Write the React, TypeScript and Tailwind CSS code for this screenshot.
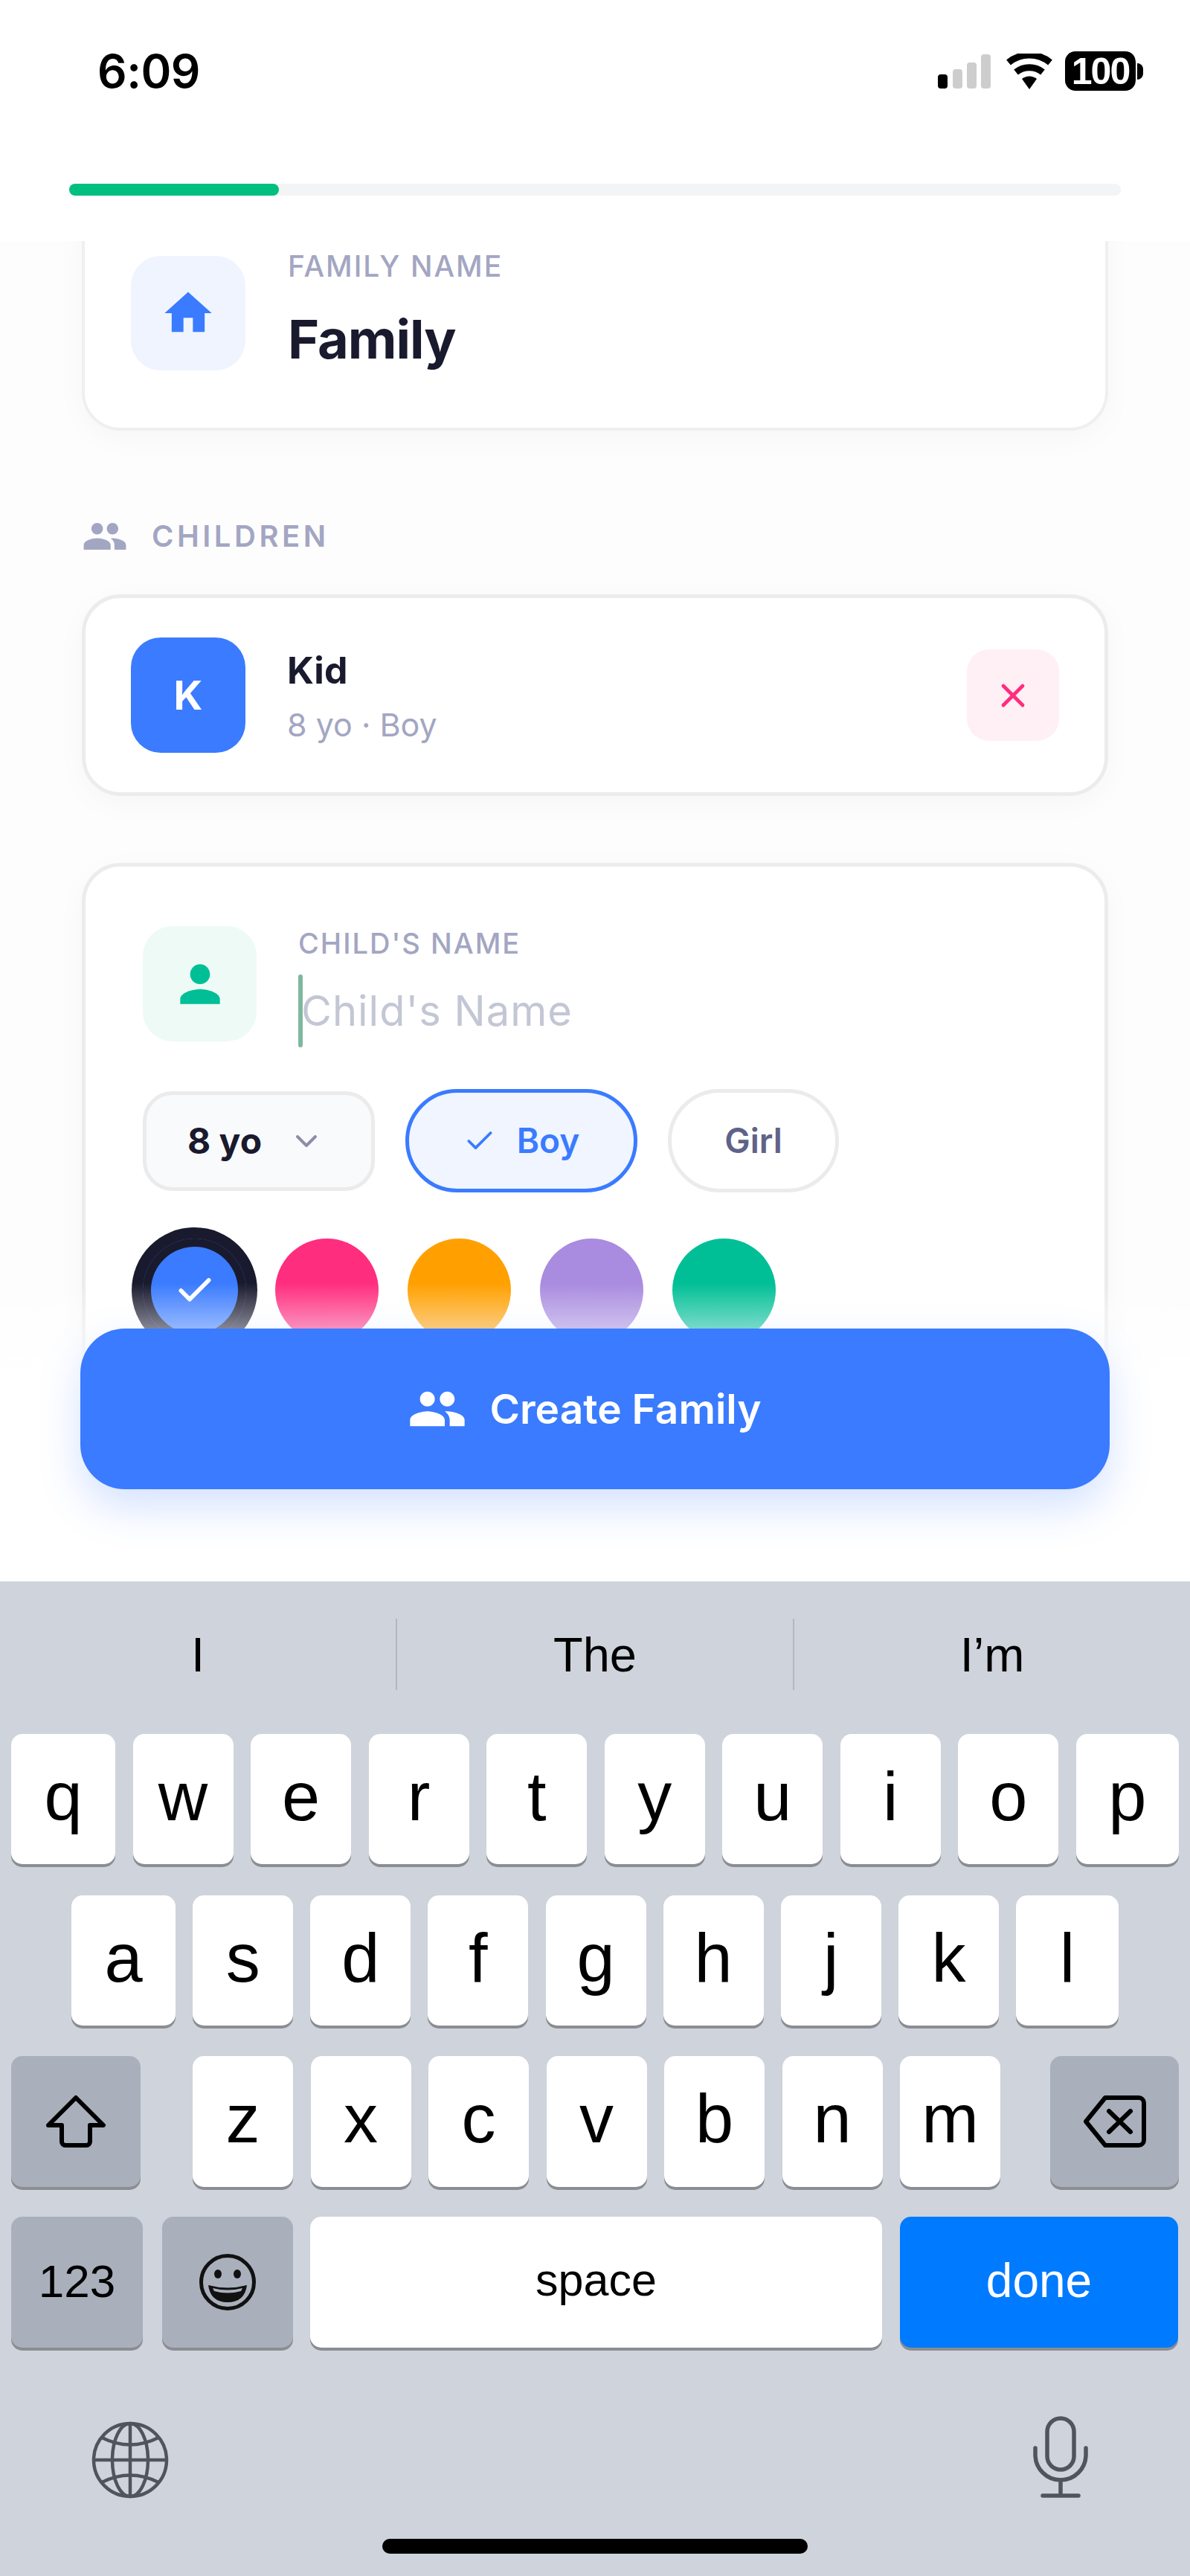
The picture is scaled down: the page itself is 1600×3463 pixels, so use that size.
import { Check, ChevronDown, X } from "lucide-react";
import { MdHome, MdPeople, MdPerson } from "react-icons/md";

const row1 = ["q", "w", "e", "r", "t", "y", "u", "i", "o", "p"];
const row2 = ["a", "s", "d", "f", "g", "h", "j", "k", "l"];
const row3 = ["z", "x", "c", "v", "b", "n", "m"];
const suggestions = ["I", "The", "I’m"];
const swatches = ["bg-[#ff2d7e]", "bg-[#ffa000]", "bg-[#a98bdf]", "bg-[#00bf96]"];

const keyBase =
  "flex items-center justify-center rounded-[15px] shadow-[0_4px_0_#8b8d92] font-['Liberation_Sans',sans-serif] text-black";

function LetterKey({ label }: { label: string }) {
  return (
    <div className={`${keyBase} h-[175px] w-[135px] bg-white pb-[8px] text-[92px] leading-none first:w-[140px] last:w-[138px]`}>
      {label}
    </div>
  );
}

function StatusIcons() {
  return (
    <div className="flex items-center">
      <svg width="72" height="46" viewBox="0 0 72 46">
        <rect x="0" y="27" width="13" height="19" rx="4" fill="#000" />
        <rect x="20" y="20" width="13" height="26" rx="4" fill="#cdcdcd" />
        <rect x="39" y="11" width="13" height="35" rx="4" fill="#cdcdcd" />
        <rect x="58" y="0" width="13" height="46" rx="4" fill="#cdcdcd" />
      </svg>
      <svg className="ml-[19px]" width="64" height="48" viewBox="0 0 64 48">
        <path d="M32 48 L22 34 a16 16 0 0 1 20 0 Z" fill="#000" />
        <path d="M14 25 a29 29 0 0 1 36 0" fill="none" stroke="#000" strokeWidth="9" />
        <path d="M4 12 a44 44 0 0 1 56 0" fill="none" stroke="#000" strokeWidth="9" />
      </svg>
      <div className="ml-[16px] flex h-[53px] w-[95px] items-center justify-center rounded-[14px] bg-black font-['Liberation_Sans',sans-serif] text-[50px] leading-none font-bold tracking-[-2px] text-white">
        100
      </div>
      <div className="ml-[2px] h-[22px] w-[8px] rounded-r-full bg-black" />
    </div>
  );
}

function ShiftIcon() {
  return (
    <svg width="82" height="72" viewBox="0 0 82 72" fill="none" stroke="#000" strokeWidth="6" strokeLinejoin="round">
      <path d="M41 4 L78 41 H60 V63 a5 5 0 0 1-5 5 H27 a5 5 0 0 1-5-5 V41 H4 Z" />
    </svg>
  );
}

function DeleteIcon() {
  return (
    <svg width="86" height="72" viewBox="0 0 86 72" fill="none" stroke="#000" strokeWidth="6" strokeLinejoin="round" strokeLinecap="round">
      <path d="M30 4 H75 a7 7 0 0 1 7 7 V61 a7 7 0 0 1-7 7 H30 L4 36 Z" />
      <path d="M35 22 L64 50 M64 22 L35 50" />
    </svg>
  );
}

function EmojiIcon() {
  return (
    <svg width="78" height="78" viewBox="0 0 78 78">
      <circle cx="39" cy="39" r="35.5" fill="none" stroke="#111" strokeWidth="5" />
      <ellipse cx="26" cy="28" rx="5" ry="6" fill="#111" />
      <ellipse cx="52" cy="28" rx="5" ry="6" fill="#111" />
      <path d="M13 43 Q39 50 65 43 Q62 66 39 66 Q16 66 13 43 Z" fill="#111" />
      <path d="M19 47 Q39 52 59 47 L57 51 Q39 56 21 51 Z" fill="#a9b0bc" />
    </svg>
  );
}

function GlobeIcon() {
  return (
    <svg width="106" height="106" viewBox="0 0 106 106" fill="none" stroke="#50555c" strokeWidth="4.5">
      <circle cx="53" cy="53" r="49" />
      <ellipse cx="53" cy="53" rx="24" ry="49" />
      <path d="M53 4 V102 M4 53 H102" />
      <path d="M15 23 Q53 42 91 23 M15 83 Q53 64 91 83" />
    </svg>
  );
}

function MicIcon() {
  return (
    <svg width="74" height="110" viewBox="0 0 74 110" fill="none" stroke="#50555c" strokeWidth="5.5" strokeLinecap="round">
      <rect x="19" y="3" width="36" height="69" rx="18" />
      <path d="M3 43 V52 a34 34 0 0 0 68 0 V43" />
      <path d="M37 86 V106 M13 107 H61" />
    </svg>
  );
}

export default function App() {
  return (
    <div className="relative flex h-[3463px] w-[1600px] flex-col overflow-hidden bg-white font-['Inter',sans-serif]">
      {/* status bar + progress */}
      <div className="h-[324px] shrink-0 bg-white">
        <div className="flex items-start justify-between pt-[69px] pr-[63px] pl-[131px]">
          <span className="text-[62px] leading-[54px] font-semibold tracking-[-0.5px] text-black">6:09</span>
          <StatusIcons />
        </div>
        <div className="mx-[93px] mt-[124px] h-[16px] rounded-full bg-[#f3f4f5]">
          <div className="h-full w-[282px] rounded-full bg-[#00bf7f]" />
        </div>
      </div>

      {/* scrolled form */}
      <div className="relative h-[1802px] shrink-0 overflow-hidden bg-[#fdfdfe]">
        <div className="-mt-[61px] px-[110px]">
          <div className="flex h-[316px] items-center gap-[57px] rounded-[52px] border-[4px] border-[#efefef] bg-white pl-[62px] shadow-[0_10px_40px_rgba(0,0,0,0.03)]">
            <div className="flex h-[154px] w-[154px] items-center justify-center rounded-[40px] bg-[#eff4ff]">
              <MdHome className="text-[#3a7bff]" size={76} />
            </div>
            <div className="mb-[11px]">
              <div className="text-[39px] leading-[44px] font-medium tracking-[2px] text-[#a3a6c2]">FAMILY NAME</div>
              <div className="mt-[36px] text-[72px] leading-[80px] font-bold tracking-[-1px] text-[#1a1a2e]">Family</div>
            </div>
          </div>

          <div className="mt-[111px] flex items-center gap-[32px]">
            <MdPeople className="text-[#a3a6c2]" size={62} />
            <span className="text-[40px] leading-[44px] font-semibold tracking-[4.5px] text-[#a3a6c2]">CHILDREN</span>
          </div>

          <div className="mt-[47px] flex h-[271px] items-center rounded-[52px] border-[5px] border-[#ececec] bg-white pr-[61px] pl-[61px] shadow-[0_10px_40px_rgba(0,0,0,0.03)]">
            <div className="flex h-[155px] w-[154px] items-center justify-center rounded-[40px] bg-[#3a7bff] text-[54px] font-bold text-white">
              K
            </div>
            <div className="ml-[56px] flex-1">
              <div className="text-[50px] leading-[60px] font-bold text-[#1a1a2e]">Kid</div>
              <div className="mt-[18px] text-[43px] leading-[50px] text-[#a3a6c2]">8 yo · Boy</div>
            </div>
            <div className="flex h-[123px] w-[124px] items-center justify-center rounded-[30px] bg-[#fff0f5]">
              <X className="text-[#ff2d7e]" size={52} strokeWidth={2.2} />
            </div>
          </div>

          <div className="mt-[90px] h-[900px] rounded-[52px] border-[5px] border-[#ececec] bg-white pt-[80px] pl-[77px] shadow-[0_10px_40px_rgba(0,0,0,0.03)]">
            <div className="flex items-start gap-[56px]">
              <div className="flex h-[155px] w-[153px] items-center justify-center rounded-[40px] bg-[#eefaf5]">
                <MdPerson className="text-[#00bf96]" size={80} />
              </div>
              <div>
                <div className="mt-[1px] text-[38px] leading-[44px] font-medium tracking-[2px] text-[#a3a6c2]">CHILD&apos;S NAME</div>
                <div className="relative mt-[20px] flex h-[98px] items-center">
                  <div className="h-[98px] w-[6px] rounded-full bg-[#7fb89f]" />
                  <span className="ml-[-2px] text-[56px] leading-none tracking-[1px] text-[#c3c6d4]">Child&apos;s Name</span>
                </div>
              </div>
            </div>

            <div className="mt-[56px] flex items-center gap-[41px]">
              <div className="flex h-[134px] w-[312px] items-center gap-[36px] rounded-[40px] border-[5px] border-[#ebebeb] bg-[#f9fafc] pl-[55px]">
                <span className="text-[48px] font-bold text-[#1a1a2e]">8 yo</span>
                <ChevronDown className="text-[#8b8ea8]" size={48} strokeWidth={2} />
              </div>
              <div className="flex h-[139px] w-[312px] items-center justify-center gap-[28px] rounded-full border-[5px] border-[#3a7bff] bg-[#f0f5ff]">
                <Check className="text-[#3a7bff]" size={44} strokeWidth={2} />
                <span className="text-[46px] font-semibold text-[#3a7bff]">Boy</span>
              </div>
              <div className="flex h-[139px] w-[230px] items-center justify-center rounded-full border-[5px] border-[#ebebeb] bg-white text-[46px] font-semibold text-[#5f6288]">
                Girl
              </div>
            </div>

            <div className="mt-[62px] flex gap-[39px]">
              <div className="flex h-[139px] w-[139px] items-center justify-center rounded-full bg-[#3a7bff] shadow-[0_0_0_15px_#1a1a2e,inset_0_0_0_11px_#1a1a2e]">
                <Check className="text-white" size={56} strokeWidth={2.4} />
              </div>
              {swatches.map((c) => (
                <div key={c} className={`h-[139px] w-[139px] rounded-full ${c}`} />
              ))}
            </div>
          </div>
        </div>

        {/* sticky footer fades the form out */}
        <div className="absolute inset-x-0 bottom-0 h-[401px] bg-gradient-to-b from-white/0 via-white via-[32%] to-white px-[108px] pt-[61px]">
          <div className="flex h-[216px] items-center justify-center gap-[30px] rounded-[60px] bg-[#3a7bff] pr-[28px] shadow-[0_24px_56px_rgba(58,123,255,0.22)]">
            <MdPeople className="text-white" size={80} />
            <span className="text-[55px] font-semibold text-white">Create Family</span>
          </div>
        </div>
      </div>

      {/* keyboard */}
      <div className="flex flex-1 flex-col bg-[#ced3dc] px-[15px]">
        <div className="-mx-[15px] flex h-[205px] items-start pt-[50px]">
          {suggestions.map((s, i) => (
            <div
              key={s}
              className={`flex h-[96px] flex-1 items-center justify-center font-['Liberation_Sans',sans-serif] text-[65px] leading-none text-black ${i > 0 ? "border-l-[2px] border-[#b4b7be]" : ""}`}
            >
              {s}
            </div>
          ))}
        </div>
        <div className="flex justify-between">
          {row1.map((k) => (
            <LetterKey key={k} label={k} />
          ))}
        </div>
        <div className="mt-[42px] flex justify-between px-[81px]">
          {row2.map((k) => (
            <LetterKey key={k} label={k} />
          ))}
        </div>
        <div className="mt-[41px] flex justify-between">
          <div className={`${keyBase} h-[176px] w-[174px] bg-[#a9b0bc]`}>
            <ShiftIcon />
          </div>
          <div className="ml-[3px] flex gap-[23.5px]">
            {row3.map((k) => (
              <div key={k} className={`${keyBase} h-[176px] w-[135px] bg-white pb-[8px] text-[92px] leading-none`}>
                {k}
              </div>
            ))}
          </div>
          <div className={`${keyBase} h-[176px] w-[173px] bg-[#a9b0bc]`}>
            <DeleteIcon />
          </div>
        </div>
        <div className="mt-[40px] flex gap-[23px]">
          <div className={`${keyBase} mr-[3px] h-[176px] w-[177px] bg-[#a9b0bc] pb-[4px] text-[62px]`}>123</div>
          <div className={`${keyBase} h-[176px] w-[176px] bg-[#a9b0bc]`}>
            <EmojiIcon />
          </div>
          <div className={`${keyBase} h-[176px] w-[769px] bg-white pb-[4px] text-[61px]`}>space</div>
          <div className={`${keyBase} ml-[1px] h-[176px] w-[374px] bg-[#007aff] pb-[4px] text-[64px] !text-white`}>done</div>
        </div>
        <div className="relative mt-[92px] flex items-start justify-between pr-[122px] pl-[107px]">
          <div className="mt-[6px]">
            <GlobeIcon />
          </div>
          <MicIcon />
        </div>
        <div className="mx-auto mt-[53px] h-[20px] w-[572px] rounded-full bg-black" />
      </div>
    </div>
  );
}
